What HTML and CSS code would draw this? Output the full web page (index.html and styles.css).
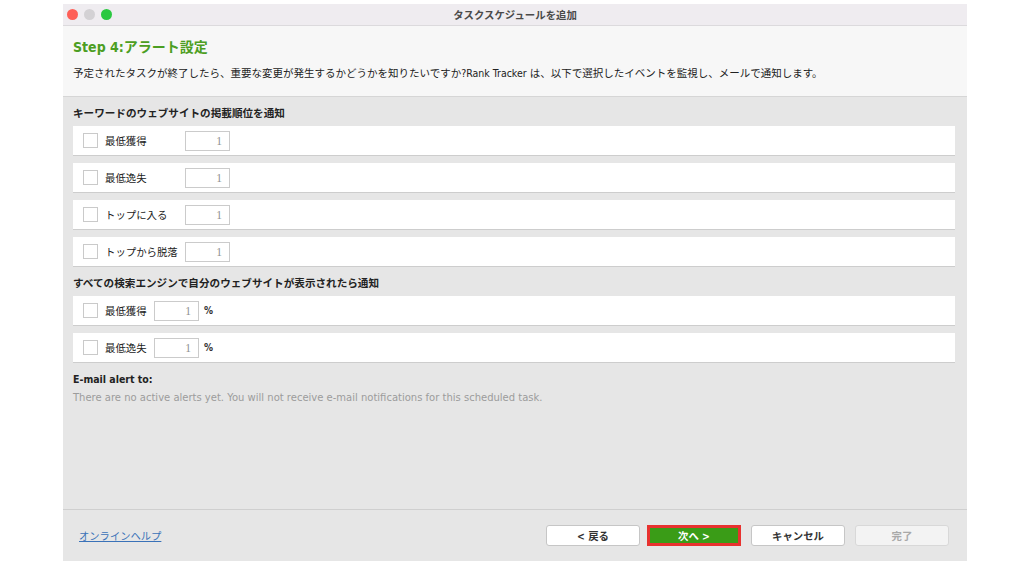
FILE: index.html
```html
<!DOCTYPE html>
<html lang="ja">
<head>
<meta charset="utf-8">
<title>タスクスケジュールを追加</title>
<link rel="stylesheet" href="styles.css">
</head>
<body>
<div class="window">
  <div class="titlebar">
    <div class="lights">
      <span class="light light-red"></span>
      <span class="light light-gray"></span>
      <span class="light light-green"></span>
    </div>
    <div class="title">タスクスケジュールを追加</div>
    <div></div>
  </div>
  <div class="header">
    <h1 class="step">Step 4:アラート設定</h1>
    <p class="desc">予定されたタスクが終了したら、重要な変更が発生するかどうかを知りたいですか?Rank Tracker は、以下で選択したイベントを監視し、メールで通知します。</p>
  </div>
  <div class="content">
    <div class="section-title">キーワードのウェブサイトの掲載順位を通知</div>
    <div class="rows">
      <div class="row"><span class="check"></span><span class="label">最低獲得</span><span class="num">1</span></div>
      <div class="row"><span class="check"></span><span class="label">最低逸失</span><span class="num">1</span></div>
      <div class="row"><span class="check"></span><span class="label">トップに入る</span><span class="num">1</span></div>
      <div class="row"><span class="check"></span><span class="label">トップから脱落</span><span class="num">1</span></div>
    </div>
    <div class="section-title">すべての検索エンジンで自分のウェブサイトが表示されたら通知</div>
    <div class="rows rows-pct">
      <div class="row"><span class="check"></span><span class="label">最低獲得</span><span class="num">1</span><span class="pct">%</span></div>
      <div class="row"><span class="check"></span><span class="label">最低逸失</span><span class="num">1</span><span class="pct">%</span></div>
    </div>
    <div class="email-title">E-mail alert to:</div>
    <div class="email-note">There are no active alerts yet. You will not receive e-mail notifications for this scheduled task.</div>
  </div>
  <div class="footer">
    <a class="help" href="#">オンラインヘルプ</a>
    <div class="buttons">
      <div class="btn btn-back">&lt; 戻る</div>
      <div class="btn btn-primary">次へ &gt;</div>
      <div class="btn">キャンセル</div>
      <div class="btn btn-disabled">完了</div>
    </div>
  </div>
</div>
</body>
</html>
```
FILE: styles.css
```css
body {
  margin: 0;
  background: #ffffff;
  font-family: "DejaVu Sans Condensed", "DejaVu Sans", "Noto Sans CJK JP", sans-serif;
  color: #222222;
}

.window {
  margin: 4px 0 0 63px;
  width: 904px;
  height: 557px;
  display: flex;
  flex-direction: column;
  overflow: hidden;
}

.titlebar {
  height: 21px;
  flex: none;
  background: #efecf0;
  border-bottom: 1px solid #dcdadd;
  display: grid;
  grid-template-columns: 1fr auto 1fr;
  align-items: center;
}

.lights {
  display: flex;
  gap: 6px;
  padding-left: 4px;
}

.light {
  width: 11px;
  height: 11px;
  border-radius: 50%;
}

.light-red { background: #fe5f57; }
.light-gray { background: #d3d1d4; }
.light-green { background: #2ac840; }

.title {
  font-family: "Noto Sans CJK JP", sans-serif;
  font-size: 10.4px;
  font-weight: bold;
  color: #4a4a4a;
}

.header {
  height: 71px;
  flex: none;
  box-sizing: border-box;
  background: #f7f7f7;
  border-bottom: 1px solid #d6d6d6;
  padding: 12px 10px 0;
}

.step {
  margin: 0;
  font-size: 14px;
  line-height: 18px;
  font-weight: bold;
  color: #4c9e22;
}

.desc {
  margin: 8px 0 0;
  font-size: 10.5px;
  line-height: 18px;
  color: #222222;
}

.content {
  flex: 1;
  background: #e6e6e6;
  padding: 7px 12px 0 10px;
}

.section-title {
  font-size: 10.6px;
  font-weight: bold;
  line-height: 18px;
  margin-bottom: 4px;
  color: #222222;
}

.row {
  height: 29px;
  background: #ffffff;
  border-bottom: 1px solid #cdcdcd;
  margin-bottom: 7px;
  display: flex;
  align-items: center;
  padding-left: 10px;
}

.check {
  width: 13px;
  height: 13px;
  border: 1px solid #cacaca;
  background: #ffffff;
  margin-right: 7px;
  flex: none;
}

.label {
  width: 80px;
  flex: none;
  font-size: 10.4px;
  color: #222222;
}

.rows-pct .label {
  width: 49px;
}

.num {
  width: 36px;
  height: 18px;
  flex: none;
  border: 1px solid #cbcbcb;
  padding-right: 7px;
  text-align: right;
  font-family: "Liberation Serif", serif;
  font-size: 11.5px;
  line-height: 18px;
  color: #8f8f8f;
  background: #ffffff;
}

.pct {
  margin-left: 5px;
  font-size: 10px;
  font-weight: bold;
  color: #333333;
}

.email-title {
  font-size: 10.5px;
  font-weight: bold;
  line-height: 18px;
  color: #222222;
}

.email-note {
  font-family: "DejaVu Sans", "Noto Sans CJK JP", sans-serif;
  font-size: 10px;
  line-height: 20px;
  color: #9c9c9c;
}

.footer {
  height: 51px;
  flex: none;
  background: #e6e6e6;
  border-top: 1px solid #cfcfcf;
  display: flex;
  align-items: center;
  padding: 0 18px 0 16px;
}

.help {
  margin-right: auto;
  font-size: 10.3px;
  color: #3a72b8;
  text-decoration: underline;
}

.buttons {
  display: flex;
  gap: 10px;
}

.btn {
  width: 94px;
  height: 21px;
  box-sizing: border-box;
  border: 1px solid #c6c6c6;
  border-radius: 3px;
  background: #ffffff;
  font-size: 10.4px;
  font-weight: bold;
  color: #333333;
  display: flex;
  align-items: center;
  justify-content: center;
}

.btn-back {
  margin-right: -3px;
}

.btn-primary {
  background: #3a9c17;
  color: #ffffff;
  border: 3px solid #e8322f;
  border-radius: 0;
}

.btn-disabled {
  color: #a9a9a9;
  background: #f3f3f3;
  border-color: #d8d8d8;
}
```
